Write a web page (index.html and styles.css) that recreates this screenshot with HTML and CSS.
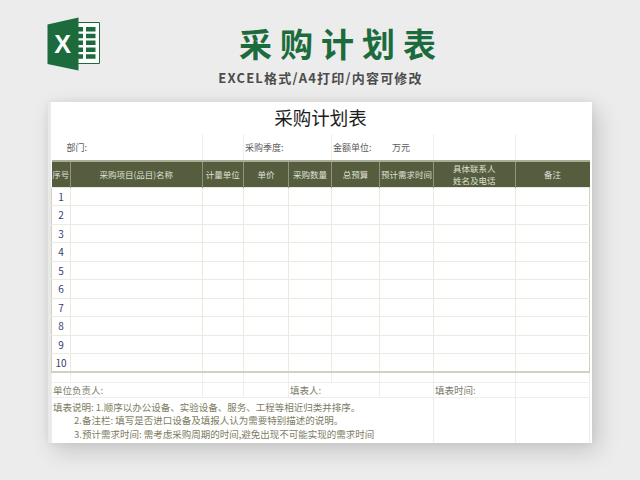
FILE: index.html
```html
<!DOCTYPE html>
<html lang="zh">
<head>
<meta charset="utf-8">
<title>采购计划表</title>
<link rel="stylesheet" href="styles.css">
</head>
<body>
<header class="banner">
  <svg class="logo" viewBox="0 0 54 54" aria-hidden="true">
    <path class="logo-sheet" d="M30 5.500H52.500V46.500H30z"/>
    <path class="logo-cells" d="M31 10h5v4.500h-5zM39 10h9.500v4.500H39zM31 16.800h5v4.500h-5zM39 16.800h9.500v4.500H39zM31 23.600h5v4.500h-5zM39 23.600h9.500v4.500H39zM31 30.400h5v4.500h-5zM39 30.400h9.500v4.500H39zM31 37.200h5v4.500h-5zM39 37.200h9.500v4.500H39z"/>
    <path class="logo-book" d="M0.500 7.500 31.500 0.500V53.500L0.500 47z"/>
    <text class="logo-x" x="15.500" y="36" text-anchor="middle">X</text>
  </svg>
  <div class="titles">
    <h1 class="title">采购计划表</h1>
    <p class="subtitle">EXCEL格式/A4打印/内容可修改</p>
  </div>
</header>
<main class="sheet">
  <table class="grid">
    <colgroup>
      <col class="c1"><col class="c2"><col class="c3"><col class="c4"><col class="c5"><col class="c6"><col class="c7"><col class="c8"><col class="c9">
    </colgroup>
    <tr class="r-title"><td colspan="9" class="sheet-title">采购计划表</td></tr>
    <tr class="r-info">
      <td colspan="2" class="dept">部门:</td>
      <td class="v"></td>
      <td colspan="2" class="v season">采购季度:</td>
      <td colspan="2" class="v unit"><span class="unit-l">金额单位:</span><span>万元</span></td>
      <td class="v"></td>
      <td class="v"></td>
    </tr>
    <tr class="r-head">
      <th>序号</th><th>采购项目(品目)名称</th><th>计量单位</th><th>单价</th><th>采购数量</th><th>总预算</th><th>预计需求时间</th><th>具体联系人<br>姓名及电话</th><th>备注</th>
    </tr>
    <tr class="r-data"><td class="n">1</td><td></td><td></td><td></td><td></td><td></td><td></td><td></td><td></td></tr>
    <tr class="r-data"><td class="n">2</td><td></td><td></td><td></td><td></td><td></td><td></td><td></td><td></td></tr>
    <tr class="r-data"><td class="n">3</td><td></td><td></td><td></td><td></td><td></td><td></td><td></td><td></td></tr>
    <tr class="r-data"><td class="n">4</td><td></td><td></td><td></td><td></td><td></td><td></td><td></td><td></td></tr>
    <tr class="r-data"><td class="n">5</td><td></td><td></td><td></td><td></td><td></td><td></td><td></td><td></td></tr>
    <tr class="r-data"><td class="n">6</td><td></td><td></td><td></td><td></td><td></td><td></td><td></td><td></td></tr>
    <tr class="r-data"><td class="n">7</td><td></td><td></td><td></td><td></td><td></td><td></td><td></td><td></td></tr>
    <tr class="r-data"><td class="n">8</td><td></td><td></td><td></td><td></td><td></td><td></td><td></td><td></td></tr>
    <tr class="r-data"><td class="n">9</td><td></td><td></td><td></td><td></td><td></td><td></td><td></td><td></td></tr>
    <tr class="r-data r-last"><td class="n">10</td><td></td><td></td><td></td><td></td><td></td><td></td><td></td><td></td></tr>
    <tr class="r-gap"><td></td><td></td><td></td><td></td><td></td><td></td><td></td><td></td><td></td></tr>
    <tr class="r-sign">
      <td colspan="2" class="s">单位负责人:</td><td></td><td></td>
      <td colspan="2" class="s">填表人:</td><td></td>
      <td class="s">填表时间:</td><td></td>
    </tr>
    <tr class="r-notes">
      <td colspan="7" class="notes">
        <p>填表说明:&nbsp;1.顺序以办公设备、实验设备、服务、工程等相近归类并排序。</p>
        <p class="ind">2.备注栏:&nbsp;填写是否进口设备及填报人认为需要特别描述的说明。</p>
        <p class="ind">3.预计需求时间:&nbsp;需考虑采购周期的时间,避免出现不可能实现的需求时间</p>
      </td>
      <td></td><td></td>
    </tr>
  </table>
</main>
</body>
</html>
```
FILE: styles.css
```css
* { box-sizing: border-box; }
html, body { margin: 0; padding: 0; }
body {
  width: 640px;
  height: 480px;
  overflow: hidden;
  background: #ececec;
  font-family: "Noto Sans CJK SC", "Noto Sans", sans-serif;
}
.banner {
  display: flex;
  height: 102px;
  padding: 17px 0 0 47px;
}
.logo { width: 54px; height: 54px; flex: none; }
.logo-sheet { fill: #ffffff; stroke: #1c6b3c; stroke-width: 1; }
.logo-cells { fill: #1c6b3c; }
.logo-book { fill: #1c6b3c; }
.logo-x {
  fill: #ffffff;
  font-family: "Liberation Sans", sans-serif;
  font-weight: 700;
  font-size: 25px;
}
.titles {
  flex: 1;
  display: flex;
  flex-direction: column;
  align-items: center;
  padding-right: 100px;
}
.title {
  margin: 3px 0 0 42px;
  font-size: 33px;
  line-height: 46px;
  font-weight: 700;
  letter-spacing: 8px;
  color: #1c6b3c;
}
.subtitle {
  margin: 2px 0 0 0;
  font-size: 13px;
  line-height: 20px;
  font-weight: 700;
  letter-spacing: 1.2px;
  color: #4c4c4c;
}
.sheet {
  width: 544px;
  height: 341px;
  margin-left: 48px;
  background: #ffffff;
  border-left: 3px solid #e9e9e9;
  box-shadow: 6px 8px 22px rgba(0, 0, 0, 0.16), 0 0 8px rgba(0, 0, 0, 0.06);
}
.grid {
  width: 538px;
  table-layout: fixed;
  border-collapse: collapse;
  font-size: 9px;
  color: #6a6a5c;
}
.c1 { width: 19px; }
.c2 { width: 131.500px; }
.c3 { width: 41.500px; }
.c4 { width: 45px; }
.c5 { width: 43px; }
.c6 { width: 48px; }
.c7 { width: 54px; }
.c8 { width: 81.500px; }
.c9 { width: 74.500px; }
td, th { padding: 0; border: 1px solid #e6e6de; }
.r-title { height: 32px; }
.r-title td { border: 0; }
.sheet-title {
  text-align: center;
  font-size: 18.500px;
  line-height: 30px;
  padding-bottom: 2px;
  color: #1c1c1c;
}
.r-info { height: 27px; }
.r-info td { border: 0; font-size: 9px; color: #5a5a5a; }
.r-info .v { border-left: 1px solid #efefef; }
.dept { padding-left: 15px; }
.season { padding-left: 1px; }
.unit { padding-left: 1px; }
.unit-l { display: inline-block; width: 59px; }
.r-head { height: 26px; }
.r-head th {
  background: #565d3f;
  border: 1px solid #8f9478;
  border-top: 2px solid #a9ad96;
  border-bottom: 0;
  color: #dfe0d4;
  font-size: 8.500px;
  line-height: 12px;
  font-weight: 400;
  text-align: center;
}
.r-head th:first-child { border-left: 0; }
.r-head th:last-child { border-right: 0; }
.r-data { height: 18.500px; }
.r-data td { border-color: #e9eae0; }
.r-data td:first-child { border-left: 1px solid #cfd2bd; }
.r-data td:last-child { border-right: 1px solid #cfd2bd; }
.n { text-align: center; font-size: 10px; color: #35406a; }
.r-last td { border-bottom: 2px solid #cfd2bd; }
.r-gap { height: 10px; }
.r-gap td { border-color: #efefeb; border-bottom-width: 1px; }
.r-sign { height: 15px; }
.r-sign td { border-color: #eeeeea; }
.s { font-size: 9.500px; color: #7c7c6a; padding-left: 1px; }
.r-notes { height: 46px; }
.r-notes td { border-color: #ececea; border-bottom: 0; }
.notes { padding: 3px 0 0 1px; vertical-align: top; font-size: 9.500px; color: #7c7c62; }
.notes p { margin: 0; line-height: 13.500px; white-space: nowrap; }
.notes .ind { padding-left: 21px; }
```
